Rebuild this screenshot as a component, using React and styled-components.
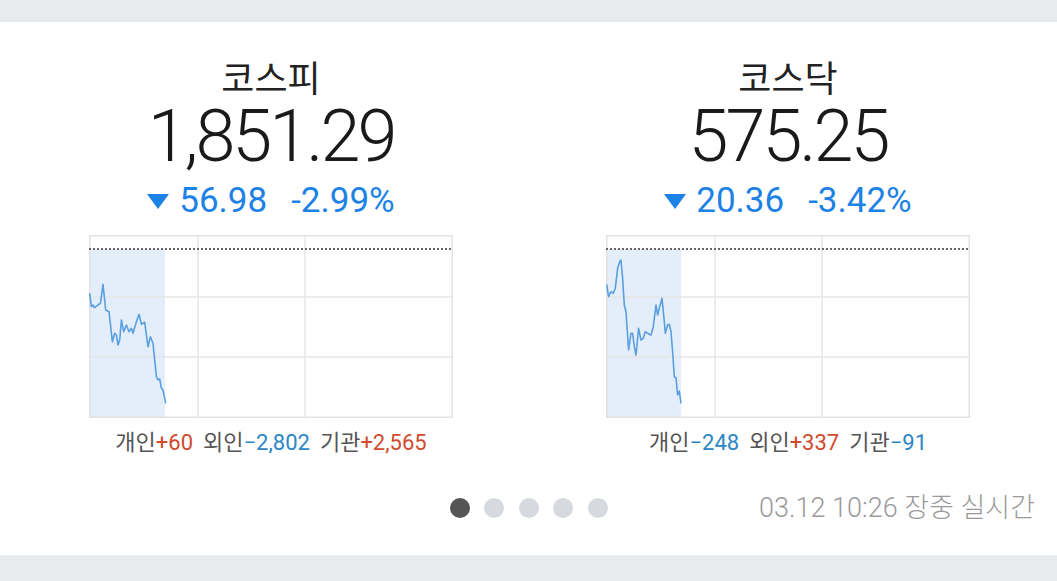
import styled, { createGlobalStyle } from 'styled-components'

const GlobalStyle = createGlobalStyle`
  html, body {
    margin: 0;
    padding: 0;
    background: #e8ebee;
  }
  body {
    font-family: Roboto, "Noto Sans CJK KR", sans-serif;
  }
`

const Page = styled.div`
  width: 1057px;
  height: 581px;
  padding: 22px 0 26px;
  box-sizing: border-box;
`

const Card = styled.div`
  background: #fff;
  height: 100%;
  display: flex;
  flex-direction: column;
  padding-top: 36px;
  box-sizing: border-box;
`

const Columns = styled.div`
  display: grid;
  grid-template-columns: 364px 364px;
  column-gap: 153px;
  justify-content: center;
  padding-left: 2px;
`

const Column = styled.div`
  display: flex;
  flex-direction: column;
  align-items: center;
`

const Title = styled.div`
  font-family: "Noto Sans CJK KR", sans-serif;
  font-size: 36px;
  line-height: 36px;
  color: #222;
`

const Price = styled.div`
  font-family: Roboto, sans-serif;
  font-weight: 300;
  font-size: 72px;
  line-height: 64px;
  letter-spacing: -3px;
  color: #1a1a1a;
  margin-top: 11px;
`

const Change = styled.div`
  display: flex;
  align-items: center;
  gap: 10px;
  font-size: 35px;
  line-height: 40px;
  color: #1c82e6;
  margin-top: 12px;
`

const Triangle = styled.span`
  width: 0;
  height: 0;
  border-left: 11px solid transparent;
  border-right: 11px solid transparent;
  border-top: 15px solid #1c82e6;
`

const Rate = styled.span`
  margin-left: 14px;
`

const ChartBox = styled.svg`
  display: block;
  margin-top: 14px;
  width: 364px;
  height: 183px;
`

const Investors = styled.div`
  margin-top: 12px;
  font-size: 22px;
  line-height: 26px;
  color: #555;
  display: flex;
  gap: 10px;
`

const Investor = styled.span``

const Num = styled.span`
  color: ${ props => props.$up ? '#d04a2e' : '#2a86c4' };
`

const Footer = styled.div`
  display: grid;
  grid-template-columns: 1fr auto 1fr;
  align-items: center;
  margin-top: 38px;
  padding: 0 22px;
`

const Dots = styled.div`
  grid-column: 2;
  display: flex;
  gap: 14.5px;
`

const Dot = styled.span`
  width: 20px;
  height: 20px;
  border-radius: 50%;
  background: ${ props => props.$active ? '#555' : '#d6d9de' };
`

const Stamp = styled.div`
  justify-self: end;
  font-weight: 300;
  font-size: 27px;
  line-height: 28px;
  color: #9a9a9a;
  white-space: nowrap;
`

// chart points measured from the reference (zoomed coords)
const kospiPts = [[30,205],[35,245],[40,240],[45,248],[55,240],[62,235],[70,178],[78,255],[88,260],[98,350],[105,325],[110,330],[115,360],[120,345],[125,285],[132,320],[140,300],[148,320],[155,310],[160,325],[170,290],[178,268],[185,298],[195,292],[205,365],[212,335],[220,355],[230,455],[235,465],[240,462],[245,490],[250,495],[258,535]]
const kosdaqPts = [[22,178],[28,215],[35,200],[42,205],[48,190],[55,130],[62,108],[65,105],[70,160],[75,240],[80,260],[88,375],[95,325],[100,325],[105,365],[110,390],[118,310],[125,345],[132,340],[138,320],[145,325],[150,328],[155,330],[162,305],[170,240],[175,270],[180,250],[188,220],[195,290],[198,325],[205,300],[210,298],[215,320],[220,380],[225,455],[230,458],[235,510],[240,498],[245,535]]

const markets = [
  {
    name: '코스피', price: '1,851.29', diff: '56.98', rate: '-2.99%',
    pts: kospiPts, dx: -9.3, fill: 76,
    investors: [['개인', '+60', true], ['외인', '−2,802', false], ['기관', '+2,565', true]],
  },
  {
    name: '코스닥', price: '575.25', diff: '20.36', rate: '-3.42%',
    pts: kosdaqPts, dx: -6.7, fill: 75,
    investors: [['개인', '−248', false], ['외인', '+337', true], ['기관', '−91', false]],
  },
]

function Chart({ pts, dx, fill }) {
  const line = pts.map(([x, y]) => `${ (x / 3 + dx).toFixed(1) },${ (y / 3 - 10).toFixed(1) }`).join(' ')
  return (
    <ChartBox viewBox='0 0 364 183'>
      <rect x='0' y='14' width={ fill } height='169' fill='#e3eefa' />
      <g stroke='#e6e6e6' strokeWidth='1.5'>
        <line x1='109' y1='0' x2='109' y2='183' />
        <line x1='216' y1='0' x2='216' y2='183' />
        <line x1='0' y1='62' x2='364' y2='62' />
        <line x1='0' y1='122' x2='364' y2='122' />
      </g>
      <rect x='0.75' y='0.75' width='362.5' height='181.5' fill='none' stroke='#e2e2e2' strokeWidth='1.5' />
      <line x1='0' y1='14' x2='364' y2='14' stroke='#666' strokeWidth='2' strokeDasharray='2 2' />
      <polyline points={ line } fill='none' stroke='#5a9fdf' strokeWidth='1.6' strokeLinejoin='round' />
    </ChartBox>
  )
}

export default function App() {
  return (
    <Page>
      <GlobalStyle />
      <Card>
        <Columns>
          { markets.map(m => (
            <Column key={ m.name }>
              <Title>{ m.name }</Title>
              <Price>{ m.price }</Price>
              <Change>
                <Triangle />
                <span>{ m.diff }</span>
                <Rate>{ m.rate }</Rate>
              </Change>
              <Chart pts={ m.pts } dx={ m.dx } fill={ m.fill } />
              <Investors>
                { m.investors.map(([label, value, up]) => (
                  <Investor key={ label }>{ label }<Num $up={ up }>{ value }</Num></Investor>
                )) }
              </Investors>
            </Column>
          )) }
        </Columns>
        <Footer>
          <Dots>
            <Dot $active />
            <Dot />
            <Dot />
            <Dot />
            <Dot />
          </Dots>
          <Stamp>03.12 10:26 장중 실시간</Stamp>
        </Footer>
      </Card>
    </Page>
  )
}
